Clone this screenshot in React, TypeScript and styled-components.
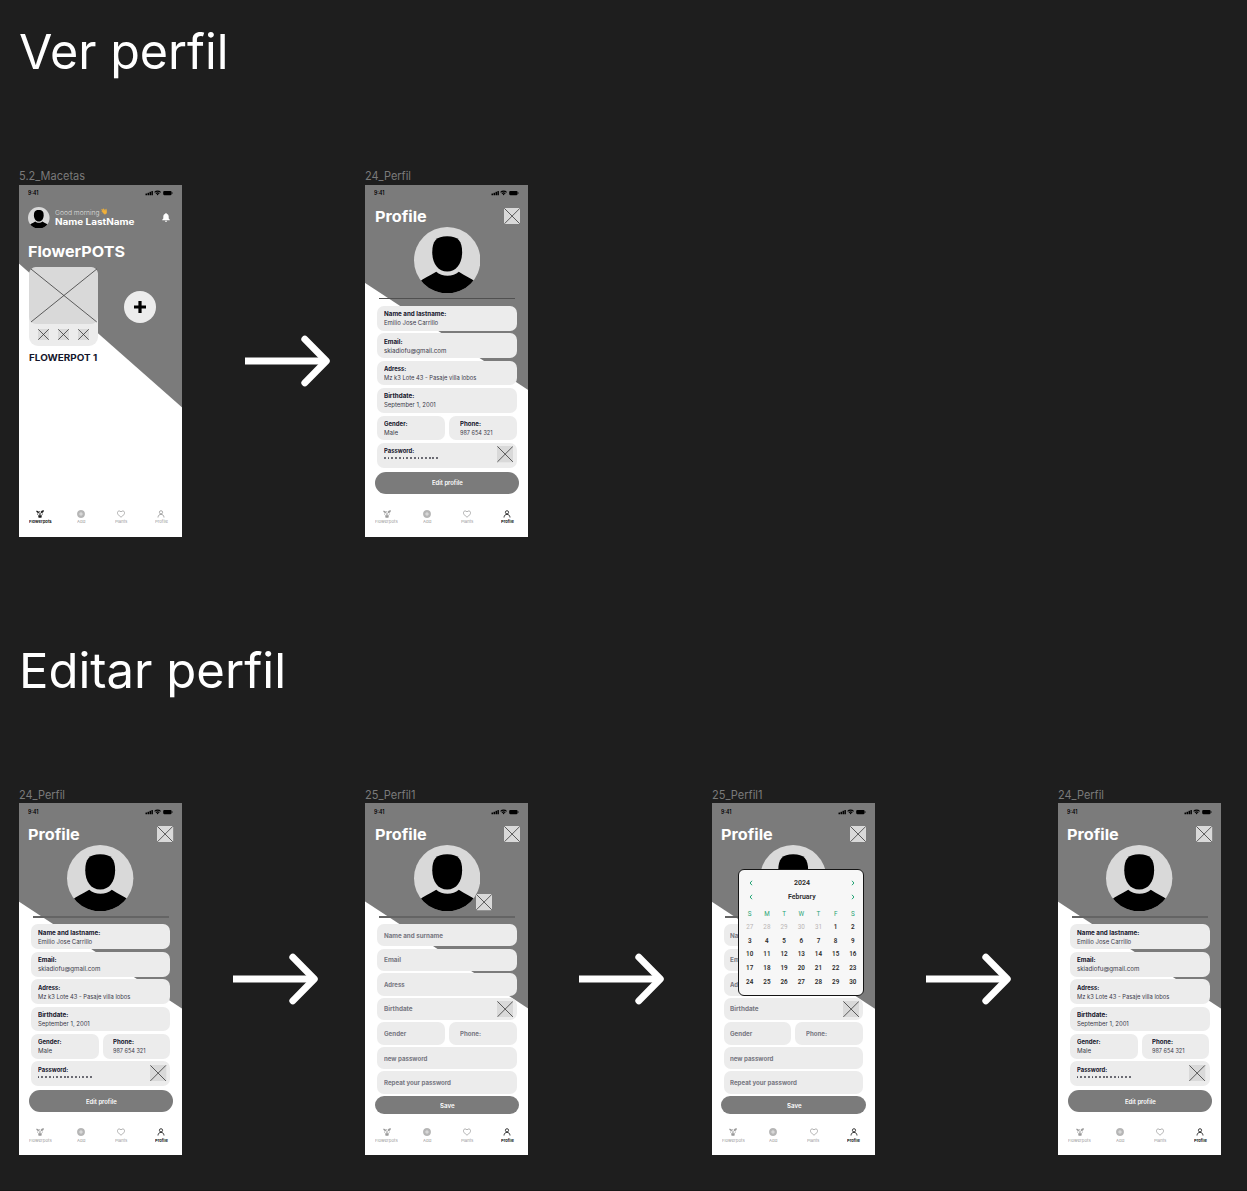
import React, { useLayoutEffect, useRef, useState } from "react";
import styled, { createGlobalStyle, css } from "styled-components";

const GlobalStyle = createGlobalStyle`
  *, *::before, *::after { box-sizing: border-box; }
  body {
    margin: 0;
    background: #1e1e1e;
    font-family: Inter, "Open Sans", sans-serif;
    overflow: hidden;
  }
  h1, h2, h3, p { margin: 0; font-weight: inherit; }
  svg { display: block; flex: none; }
`;

/* ---------- text set to a fixed measure ---------- */

const Measure = styled.span<{ $w: number }>`
  display: block;
  flex: none;
  width: ${(p) => p.$w}px;
  white-space: nowrap;
`;
const Glyphs = styled.span`
  display: inline-block;
  transform-origin: 0 50%;
  vertical-align: top;
`;

function Fit({ w, children }: { w: number; children: string }) {
  const ref = useRef<HTMLSpanElement>(null);
  const [scale, setScale] = useState(1);
  useLayoutEffect(() => {
    const natural = parseFloat(getComputedStyle(ref.current!).width);
    if (natural) setScale(w / natural);
  }, [w, children]);
  return (
    <Measure $w={w}>
      <Glyphs ref={ref} style={{ transform: `scaleX(${scale})` }}>{children}</Glyphs>
    </Measure>
  );
}

/* ---------- board ---------- */

const Board = styled.main`
  width: 1247px;
  height: 1191px;
  padding: 22px 0 0 19px;
  overflow: hidden;
  background: #1e1e1e;
  border-bottom: 1px solid #171717;
`;
const Section = styled.section`
  height: 618.5px;
`;
const Heading = styled.h1`
  font-size: 48.5px;
  line-height: 60px;
  font-weight: 400;
  color: #fff;
`;
const Flow = styled.div`
  display: flex;
  margin-top: 88px;
`;
const Step = styled.div`
  display: flex;
  flex: none;
  width: 346.35px;
`;
const FrameColumn = styled.div`
  flex: none;
  width: 163px;
`;
const FrameLabel = styled.h2`
  margin-bottom: 1.5px;
  font-size: 11.1px;
  line-height: 13px;
  color: #7a7a7a;
`;
const ArrowSlot = styled.div<{ $gap: number }>`
  display: flex;
  align-items: center;
  height: 352px;
  margin: 14.5px 0 0 ${(p) => p.$gap}px;
`;

/* ---------- phone ---------- */

const Phone = styled.article<{ $l: number; $r: number }>`
  position: relative;
  display: flex;
  flex-direction: column;
  height: 352.4px;
  background: #fff;
  color: #15152b;
  isolation: isolate;
  &::before {
    content: "";
    position: absolute;
    inset: 0;
    z-index: -1;
    background: #7b7b7b;
    clip-path: polygon(-1px -1px, calc(100% + 1px) -1px, calc(100% + 1px) ${(p) => p.$r + 0.7}px, -1px ${(p) => p.$l - 0.7}px);
  }
`;
const StatusRow = styled.div`
  display: flex;
  justify-content: space-between;
  align-items: center;
  height: 18px;
  padding: 0 9px 1px 9px;
  font-size: 5.6px;
  line-height: 8px;
  font-weight: 600;
  color: #000;
`;
const TitleRow = styled.header`
  display: flex;
  justify-content: space-between;
  align-items: flex-start;
  height: 24px;
  padding: 5.2px 8.4px 0 9.3px;
`;
const Title = styled.h3`
  font-size: 15.2px;
  line-height: 18.5px;
  font-weight: 700;
  color: #fff;
`;
const Portrait = styled.div`
  position: relative;
  align-self: center;
  width: 66.4px;
  height: 66.4px;
`;
const CameraBadge = styled.div`
  position: absolute;
  left: 62.6px;
  top: 49.4px;
`;
const Divider = styled.hr<{ $thick?: boolean }>`
  width: 136px;
  height: ${(p) => (p.$thick ? 2 : 1)}px;
  margin: 4.9px 0 0 13.5px;
  border: 0;
  background: ${(p) => (p.$thick ? "#646464" : "#505050")};
`;
const Form = styled.div<{ $gap: number; $top: number }>`
  display: flex;
  flex-direction: column;
  gap: ${(p) => p.$gap}px;
  width: 139.6px;
  margin: ${(p) => p.$top}px 0 0 11.9px;
`;
const Pair = styled.div`
  display: grid;
  grid-template-columns: 67.7px 67.7px;
  column-gap: 4.2px;
`;
const fieldBox = css<{ $indent?: boolean }>`
  display: flex;
  background: #ececec;
  border-radius: 7px;
  padding-left: ${(p) => (p.$indent ? 10.4 : 6.7)}px;
`;
const ReadField = styled.div<{ $indent?: boolean }>`
  ${fieldBox}
  justify-content: space-between;
  height: 24.8px;
  padding-top: 3.4px;
  padding-right: 3.8px;
`;
const FieldLabel = styled.p`
  font-size: 5.7px;
  line-height: 9px;
  font-weight: 700;
`;
const FieldValue = styled.p`
  font-size: 5.7px;
  line-height: 9px;
  color: #3a3a4a;
`;
const Dots = styled.p`
  display: flex;
  gap: 1.94px;
  padding-top: 2.1px;
`;
const Dot = styled.i`
  width: 1.8px;
  height: 1.8px;
  border-radius: 50%;
  background: #45454f;
`;
const EditField = styled.div<{ $indent?: boolean }>`
  ${fieldBox}
  justify-content: space-between;
  align-items: center;
  height: 22.2px;
  padding-right: 3.8px;
  font-size: 5.8px;
  line-height: 9px;
  font-weight: 700;
  color: #777781;
`;
const Action = styled.button<{ $h: number; $top: number }>`
  display: flex;
  align-items: center;
  justify-content: center;
  width: 144.4px;
  height: ${(p) => p.$h}px;
  margin: ${(p) => p.$top}px 0 0 9.5px;
  padding: 0;
  border: 0;
  border-radius: 12px;
  background: #7b7b7b;
  color: #fff;
  font: 600 5.8px/9px Inter, sans-serif;
`;
const Tabs = styled.nav`
  display: grid;
  grid-template-columns: repeat(4, 40.2px);
  height: 27.4px;
  margin: auto 0 0 1.4px;
`;
const Tab = styled.div<{ $on: boolean }>`
  display: flex;
  flex-direction: column;
  align-items: center;
  gap: 1.8px;
  font-size: 4px;
  line-height: 5px;
  font-weight: ${(p) => (p.$on ? 700 : 400)};
  color: ${(p) => (p.$on ? "#1c1c1c" : "#999")};
`;

/* ---------- flowerpot screen ---------- */

const Greeting = styled.header`
  display: flex;
  align-items: center;
  height: 31px;
  padding: 0 12px 1px 9.3px;
`;
const GreetingText = styled.div`
  flex: 1;
  padding: 0 0 1px 5px;
`;
const Hello = styled.p`
  display: flex;
  gap: 1.5px;
  font-size: 6.2px;
  line-height: 9px;
  font-weight: 300;
  color: #dedede;
`;
const UserName = styled.p`
  font-size: 8.8px;
  line-height: 10px;
  font-weight: 700;
  color: #fff;
`;
const PotsTitle = styled.h3`
  padding: 9.3px 0 0 9.1px;
  font-size: 15.2px;
  line-height: 18px;
  font-weight: 700;
  color: #fff;
`;
const PotsRow = styled.div`
  display: flex;
  align-items: center;
  gap: 25.6px;
  padding: 6.2px 0 0 9.5px;
`;
const PotCard = styled.div`
  width: 69.8px;
  height: 79.5px;
  border-radius: 9px;
  background: #ececec;
`;
const PotImage = styled.div`
  height: 57px;
  border-radius: 7px;
  background: #d9d9d9;
`;
const PotActions = styled.div`
  display: flex;
  justify-content: center;
  gap: 8.8px;
  padding-top: 5.4px;
`;
const AddPot = styled.div`
  display: grid;
  place-items: center;
  width: 32.4px;
  height: 32.4px;
  border-radius: 50%;
  background: #ececec;
`;
const PotName = styled.p`
  padding: 5.6px 0 0 9.6px;
  font-size: 8.7px;
  line-height: 12px;
  font-weight: 700;
`;

/* ---------- calendar ---------- */

const CalendarCard = styled.aside`
  position: absolute;
  left: 26.8px;
  top: 66.4px;
  width: 125.6px;
  height: 127px;
  padding: 5.6px 1px 0 1px;
  border: 1.4px solid #151515;
  border-radius: 6px;
  background: #f7f7f7;
  font-family: Roboto, sans-serif;
  color: #2b2b2b;
`;
const CalendarNav = styled.div`
  display: flex;
  align-items: center;
  justify-content: space-between;
  height: 13.7px;
  padding: 0 7px 0 8.5px;
  font-size: 7.2px;
  line-height: 10px;
  font-weight: 600;
`;
const Days = styled.div`
  display: grid;
  grid-template-columns: repeat(7, 17.2px);
  grid-template-rows: 12.6px;
  grid-auto-rows: 13.7px;
  padding-top: 4.2px;
  justify-content: center;
  justify-items: center;
  align-items: center;
`;
const Day = styled.span<{ $tone: "head" | "muted" | "day" }>`
  font-size: 6.3px;
  line-height: 8px;
  font-weight: ${(p) => (p.$tone === "day" ? 600 : 400)};
  color: ${(p) => ({ head: "#1fa373", muted: "#b9b5b5", day: "#2b2b2b" })[p.$tone]};
`;

/* ---------- drawings ---------- */

const Arrow = () => (
  <svg width="86" height="52" viewBox="0 0 86 52" fill="none" stroke="#fff" strokeWidth="6.9">
    <path d="M0 26H79" />
    <path d="M59.8 4.2L81.3 26L59.8 47.8" strokeLinecap="round" strokeLinejoin="round" />
  </svg>
);

const CrossBox = ({ size, rounded }: { size: number; rounded?: boolean }) => (
  <svg width={size} height={size} viewBox="0 0 16 16">
    <rect width="16" height="16" rx={rounded ? 1.2 : 0} fill="#d9d9d9" />
    <path d="M.4 .4L15.6 15.6M15.6 .4L.4 15.6" stroke="#2f2f2f" strokeWidth={size < 14 ? 1.1 : 0.75} />
  </svg>
);

const Avatar = ({ size, id }: { size: number; id: string }) => (
  <svg width={size} height={size} viewBox="0 0 200 200">
    <clipPath id={id}><circle cx="100" cy="100" r="100" /></clipPath>
    <circle cx="100" cy="100" r="100" fill="#d9d9d9" />
    <g clipPath={`url(#${id})`}>
      <path d="M100 28C133 28 145 42 145 76C145 110 128 134 100 134C72 134 55 110 55 76C55 42 67 28 100 28Z" />
      <path d="M14 168C28 154 48 147 67 135C84 151 118 151 135 135C152 147 172 154 188 168V202H14Z" />
    </g>
  </svg>
);

const StatusIcons = () => (
  <svg width="28" height="6" viewBox="0 0 28 6">
    <rect x="0.5" y="3.4" width="1.5" height="1.8" rx=".3" />
    <rect x="2.5" y="2.7" width="1.5" height="2.5" rx=".3" />
    <rect x="4.5" y="1.8" width="1.5" height="3.4" rx=".3" />
    <rect x="6.4" y="0.9" width="1.5" height="4.3" rx=".3" />
    <path d="M9.6 2.3C11.2 .7 14 .7 15.6 2.3M10.9 3.6C11.8 2.8 13.4 2.8 14.3 3.6" fill="none" stroke="#000" strokeWidth="1.05" />
    <circle cx="12.6" cy="4.5" r=".8" />
    <rect x="18.2" y="1" width="8.4" height="4.2" rx="1.1" />
    <rect x="26.9" y="2.3" width=".6" height="1.5" rx=".3" />
  </svg>
);

const PotIcon = () => (
  <svg width="8" height="8" viewBox="0 0 16 16" fill="currentColor">
    <path d="M4.2 10.6H11.8L10.9 15.4H5.1Z" />
    <path d="M7.4 10.6C7.4 7 6 5.6 3.6 4.6M8.4 10.6C8.4 7 9.6 5.4 12 4.2" fill="none" stroke="currentColor" strokeWidth="1.3" />
    <path d="M.4 1.6C3.6 .8 6 2.4 6.2 5.6C3 6.6 .6 4.8 .4 1.6Z" />
    <path d="M15.8 .8C12 .2 9.4 2 9.6 5.6C13.2 6.4 15.6 4.4 15.8 .8Z" />
    <circle cx="7.4" cy="3.6" r="1.3" />
    <circle cx="3.2" cy="8" r="1.2" />
    <circle cx="12.6" cy="8" r="1.2" />
  </svg>
);
const AddIcon = () => (
  <svg width="8" height="8" viewBox="0 0 16 16">
    <circle cx="8" cy="8" r="7.3" fill="#b8b8b8" stroke="#a8a8a8" />
    <path d="M8 4.2V11.8M4.2 8H11.8" stroke="#ececec" strokeWidth="1.5" />
  </svg>
);
const HeartIcon = () => (
  <svg width="8" height="8" viewBox="0 0 16 16" fill="none" stroke="currentColor" strokeWidth="1.5">
    <path d="M8 14.4C3 10.8 .9 8.2 .9 5.4C.9 1.4 6 .6 8 3.9C10 .6 15.1 1.4 15.1 5.4C15.1 8.2 13 10.8 8 14.4Z" />
  </svg>
);
const PersonIcon = () => (
  <svg width="8" height="8" viewBox="0 0 16 16" fill="none" stroke="currentColor" strokeWidth="1.7">
    <circle cx="8" cy="4.6" r="3.2" />
    <path d="M2 15C2.2 10.8 4.6 8.8 8 8.8C11.4 8.8 13.8 10.8 14 15" />
  </svg>
);
const Bell = () => (
  <svg width="8" height="9" viewBox="0 0 16 18" fill="#fff">
    <path d="M8 0C8.9 0 9.4 .6 9.4 1.5C12 2.2 13.4 4.4 13.4 7.4V11L15.6 13.4V14.6H.4V13.4L2.6 11V7.4C2.6 4.4 4 2.2 6.6 1.5C6.6 .6 7.1 0 8 0Z" />
    <path d="M5.8 15.6H10.2C10.2 17 9.2 17.9 8 17.9C6.8 17.9 5.8 17 5.8 15.6Z" />
  </svg>
);
const Wave = () => (
  <svg width="6.5" height="7" viewBox="0 0 13 14">
    <path d="M1.8 2.4L6 6.2L3.4 2.2L5 1.4L8.6 5.4L9.2 2.6L11 3L11.6 8.6C11.4 11.4 8.8 13.2 6.4 12L1.2 6.2L2.2 5.2L4.4 7L.8 3.2Z" fill="#f0b03a" stroke="#f0b03a" strokeWidth=".8" strokeLinejoin="round" />
    <path d="M11.6 .8L12.6 2M.6 10L2.2 11.8" stroke="#c9a15a" strokeWidth=".7" />
  </svg>
);
const Chevron = ({ flip }: { flip?: boolean }) => (
  <svg width="4" height="6" viewBox="0 0 4 6" fill="none" stroke="#1fa373" strokeWidth="1">
    <path d={flip ? "M1 .8L2.9 3L1 5.2" : "M3 .8L1.1 3L3 5.2"} />
  </svg>
);

/* ---------- parts ---------- */

const StatusBar = () => (
  <StatusRow><Fit w={10.3}>9:41</Fit><StatusIcons /></StatusRow>
);

const tabItems = [
  { name: "Flowerpots", w: 22.7, Icon: PotIcon },
  { name: "Add", w: 8.3, Icon: AddIcon },
  { name: "Plants", w: 12.4, Icon: HeartIcon },
  { name: "Profile", w: 13, Icon: PersonIcon },
];
const TabBar = ({ active }: { active: string }) => (
  <Tabs>
    {tabItems.map(({ name, w, Icon }) => (
      <Tab key={name} $on={name === active}><Icon /><Fit w={w}>{name}</Fit></Tab>
    ))}
  </Tabs>
);

type TextSpec = [string, number];
const Read = ({ label, value, indent, boxed }: { label: TextSpec; value?: TextSpec; indent?: boolean; boxed?: boolean }) => (
  <ReadField $indent={indent}>
    <div>
      <FieldLabel><Fit w={label[1]}>{label[0]}</Fit></FieldLabel>
      {value
        ? <FieldValue><Fit w={value[1]}>{value[0]}</Fit></FieldValue>
        : <Dots>{Array.from({ length: 15 }, (_, i) => <Dot key={i} />)}</Dots>}
    </div>
    {boxed && <CrossBox size={16.3} />}
  </ReadField>
);
const Edit = ({ label, indent, boxed }: { label: TextSpec; indent?: boolean; boxed?: boolean }) => (
  <EditField $indent={indent}>
    <Fit w={label[1]}>{label[0]}</Fit>
    {boxed && <CrossBox size={16.3} />}
  </EditField>
);

const ProfileHead = ({ id, camera }: { id: string; camera?: boolean }) => (
  <>
    <StatusBar />
    <TitleRow><Title><Fit w={51.8}>Profile</Fit></Title><CrossBox size={16.2} rounded /></TitleRow>
    <Portrait>
      <Avatar size={66.4} id={id} />
      {camera && <CameraBadge><CrossBox size={16.2} rounded /></CameraBadge>}
    </Portrait>
  </>
);

const ProfileScreen = ({ id, thick }: { id: string; thick?: boolean }) => (
  <Phone $l={98.8} $r={205.5}>
    <ProfileHead id={id} />
    <Divider $thick={thick} />
    <Form $gap={2.65} $top={thick ? 6 : 7}>
      <Read label={["Name and lastname:", 62.4]} value={["Emilio Jose Carrillo", 54.2]} />
      <Read label={["Email:", 18.6]} value={["skiadiofu@gmail.com", 62.3]} />
      <Read label={["Adress:", 22.2]} value={["Mz k3 Lote 43 - Pasaje villa lobos", 92.4]} />
      <Read label={["Birthdate:", 30.4]} value={["September 1, 2001", 51.8]} />
      <Pair>
        <Read label={["Gender:", 23.6]} value={["Male", 14.2]} />
        <Read label={["Phone:", 21]} value={["987 654 321", 32.5]} indent />
      </Pair>
      <Read label={["Password:", 30.3]} boxed />
    </Form>
    <Action $h={22.2} $top={4}><Fit w={30.8}>Edit profile</Fit></Action>
    <TabBar active="Profile" />
  </Phone>
);

const EditScreen = ({ id, camera, children }: { id: string; camera?: boolean; children?: React.ReactNode }) => (
  <Phone $l={98.8} $r={205.5}>
    <ProfileHead id={id} camera={camera} />
    <Divider $thick />
    <Form $gap={2.35} $top={6}>
      <Edit label={["Name and surname", 59]} />
      <Edit label={["Email", 17]} />
      <Edit label={["Adress", 20.6]} />
      <Edit label={["Birthdate", 28.6]} boxed />
      <Pair>
        <Edit label={["Gender", 22.2]} />
        <Edit label={["Phone:", 21]} indent />
      </Pair>
      <Edit label={["new password", 43.4]} />
      <Edit label={["Repeat your password", 67]} />
    </Form>
    <Action $h={18} $top={2.8}><Fit w={14.6}>Save</Fit></Action>
    <TabBar active="Profile" />
    {children}
  </Phone>
);

const PotsScreen = () => (
  <Phone $l={79} $r={223}>
    <StatusBar />
    <Greeting>
      <Avatar size={21.6} id="pots" />
      <GreetingText>
        <Hello><Fit w={44.6}>Good morning</Fit><Wave /></Hello>
        <UserName><Fit w={79.4}>Name LastName</Fit></UserName>
      </GreetingText>
      <Bell />
    </Greeting>
    <PotsTitle><Fit w={97}>FlowerPOTS</Fit></PotsTitle>
    <PotsRow>
      <PotCard>
        <PotImage>
          <svg width="69.8" height="57" viewBox="0 0 69.8 57">
            <path d="M2 2L67.8 55M67.8 2L2 55" stroke="#3a3a3a" strokeWidth=".8" />
          </svg>
        </PotImage>
        <PotActions><CrossBox size={11} /><CrossBox size={11} /><CrossBox size={11} /></PotActions>
      </PotCard>
      <AddPot>
        <svg width="12" height="12" viewBox="0 0 12 12"><path d="M6 0V12M0 6H12" stroke="#000" strokeWidth="3.2" /></svg>
      </AddPot>
    </PotsRow>
    <PotName><Fit w={68.3}>FLOWERPOT 1</Fit></PotName>
    <TabBar active="Flowerpots" />
  </Phone>
);

const leading = [27, 28, 29, 30, 31];
const monthDays = Array.from({ length: 30 }, (_, i) => i + 1);
const Calendar = () => (
  <CalendarCard>
    <CalendarNav><Chevron /><Fit w={16}>2024</Fit><Chevron flip /></CalendarNav>
    <CalendarNav><Chevron /><Fit w={27.6}>February</Fit><Chevron flip /></CalendarNav>
    <Days>
      {"SMTWTFS".split("").map((d, i) => <Day key={i} $tone="head">{d}</Day>)}
      {leading.map((d) => <Day key={`p${d}`} $tone="muted">{d}</Day>)}
      {monthDays.map((d) => <Day key={d} $tone="day">{d}</Day>)}
    </Days>
  </CalendarCard>
);

const Stage = ({ label, w, gap, children }: { label: string; w: number; gap?: number; children: React.ReactNode }) => (
  <Step>
    <FrameColumn>
      <FrameLabel><Fit w={w}>{label}</Fit></FrameLabel>
      {children}
    </FrameColumn>
    {gap !== undefined && <ArrowSlot $gap={gap}><Arrow /></ArrowSlot>}
  </Step>
);

export default function App() {
  return (
    <>
      <GlobalStyle />
      <Board>
        <Section>
          <Heading><Fit w={209.5}>Ver perfil</Fit></Heading>
          <Flow>
            <Stage label="5.2_Macetas" w={66} gap={62.5}><PotsScreen /></Stage>
            <Stage label="24_Perfil" w={46}><ProfileScreen id="view" /></Stage>
          </Flow>
        </Section>
        <Section>
          <Heading><Fit w={267}>Editar perfil</Fit></Heading>
          <Flow>
            <Stage label="24_Perfil" w={46} gap={51}><ProfileScreen id="start" thick /></Stage>
            <Stage label="25_Perfil1" w={50.5} gap={51}><EditScreen id="edit" camera /></Stage>
            <Stage label="25_Perfil1" w={50.5} gap={51}><EditScreen id="date"><Calendar /></EditScreen></Stage>
            <Stage label="24_Perfil" w={46}><ProfileScreen id="end" thick /></Stage>
          </Flow>
        </Section>
      </Board>
    </>
  );
}
